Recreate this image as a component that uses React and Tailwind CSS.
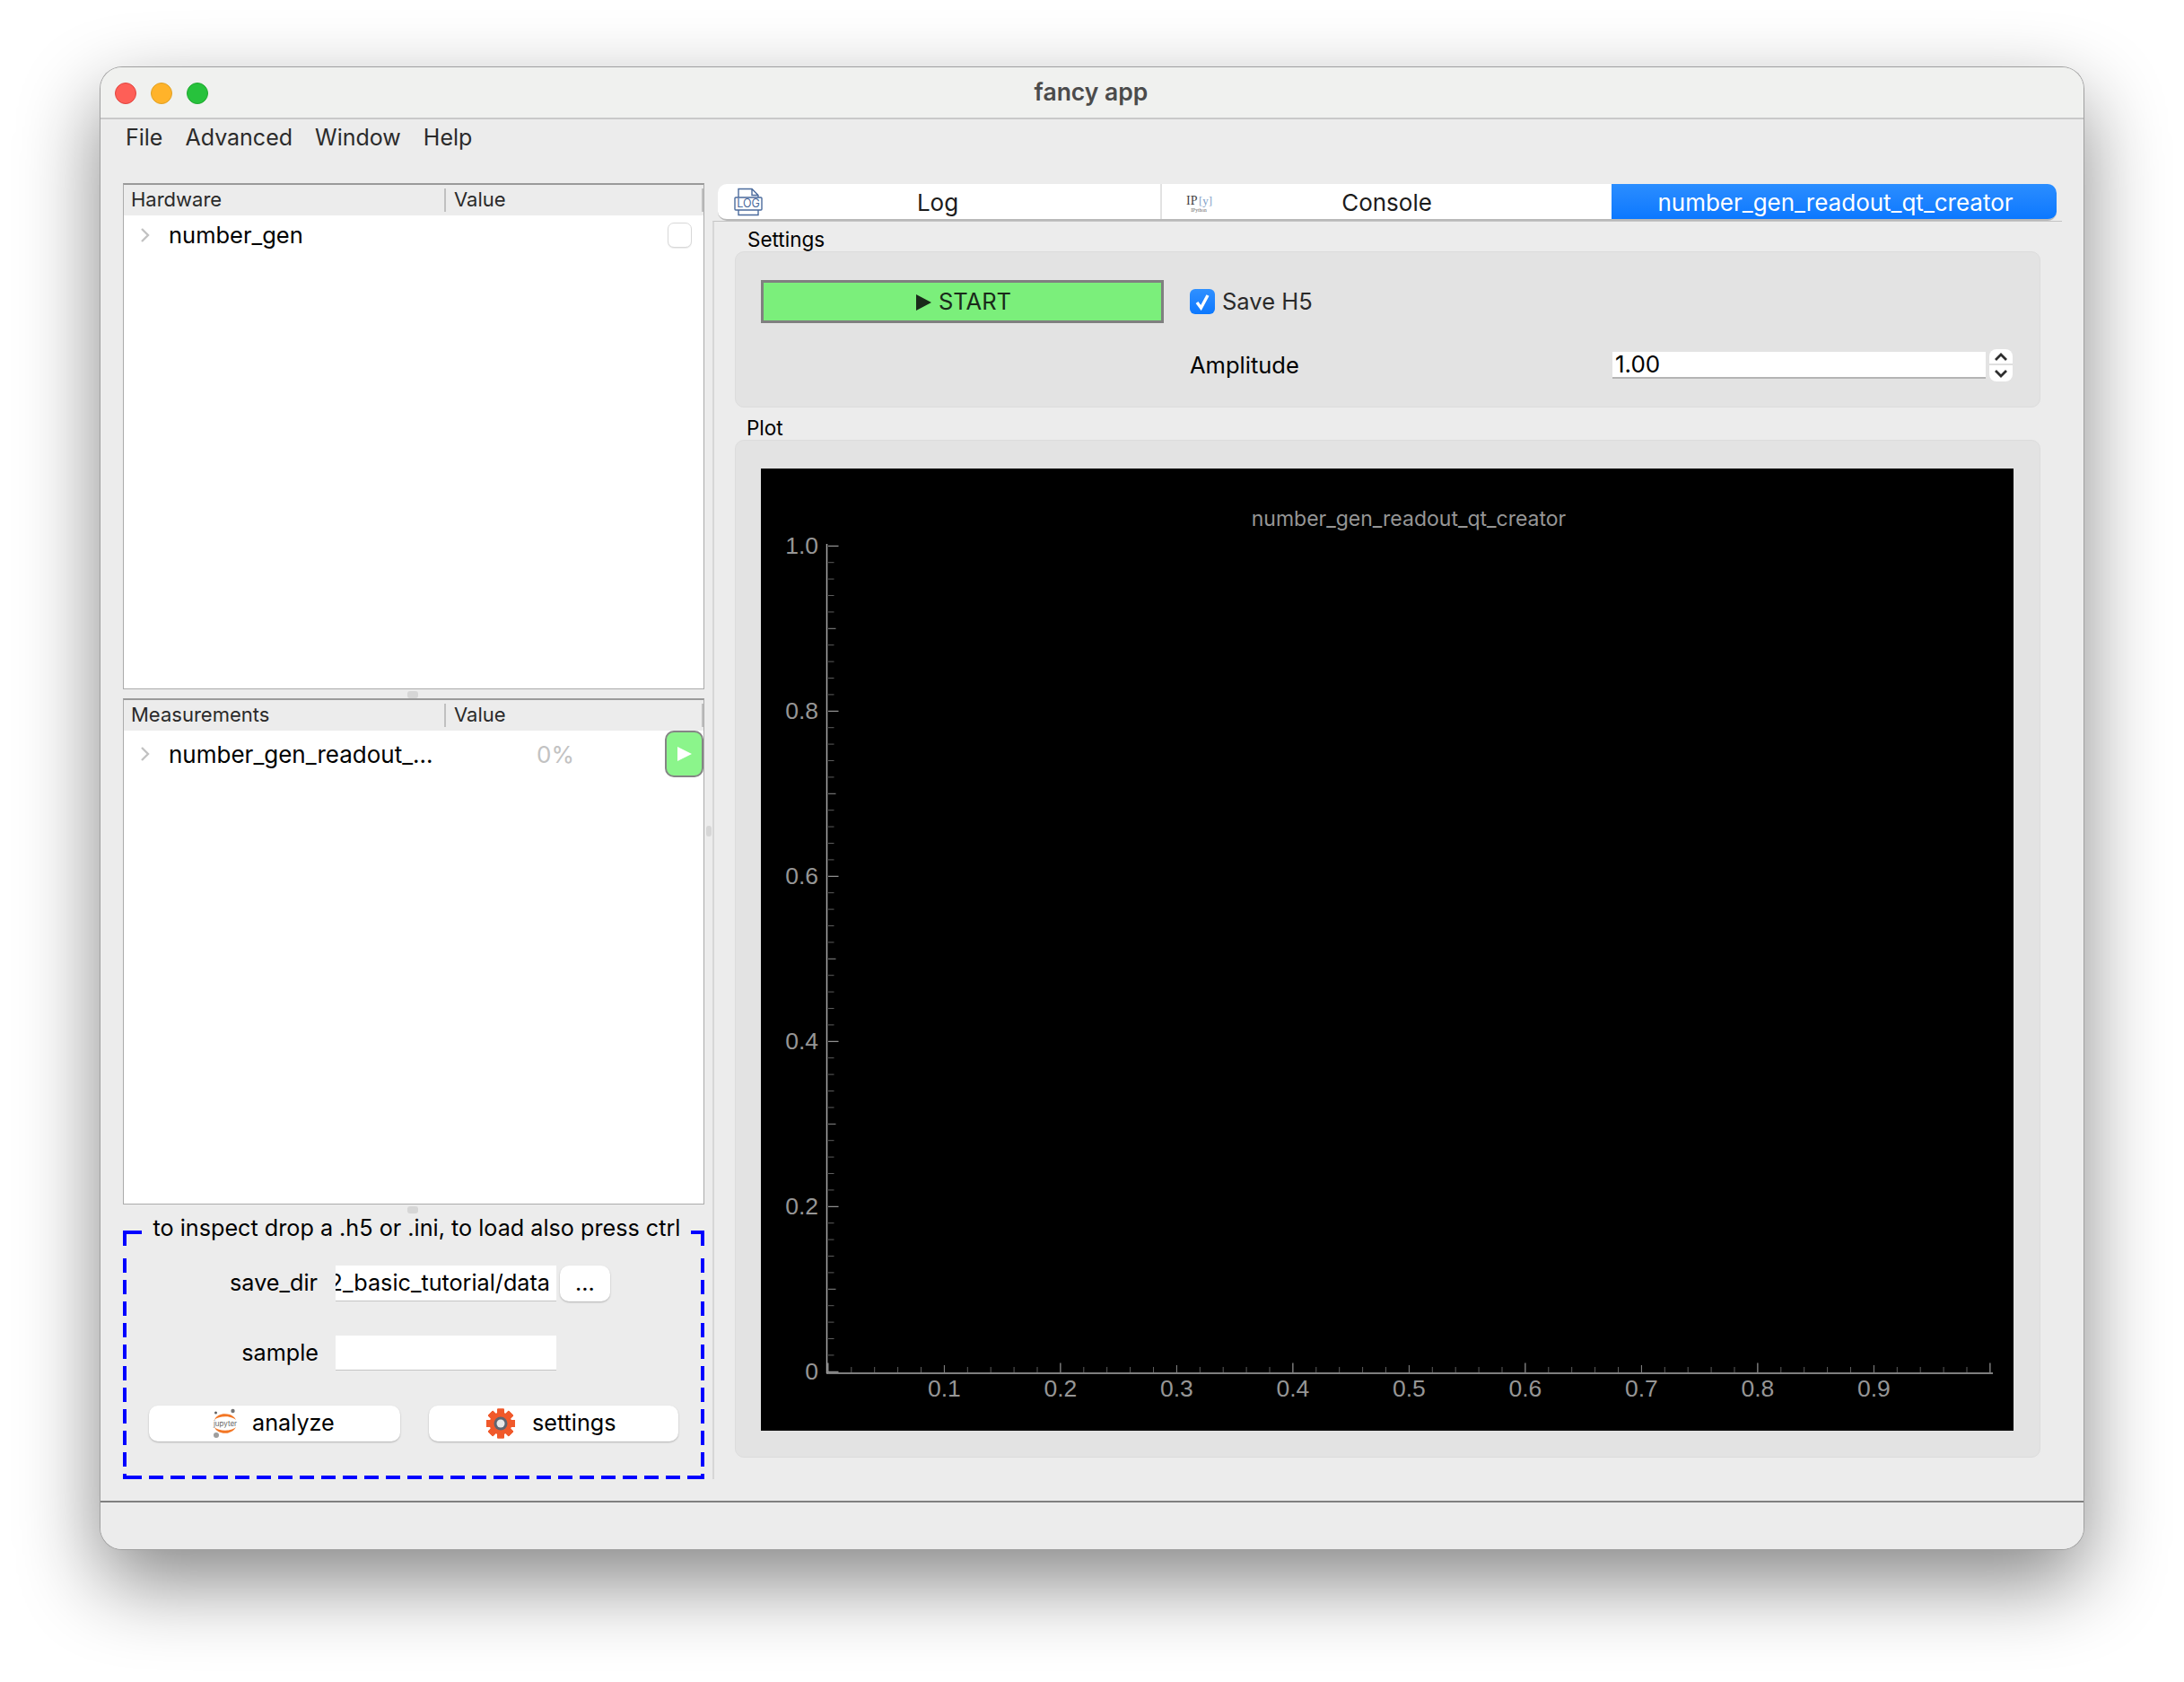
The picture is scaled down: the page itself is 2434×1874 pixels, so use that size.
import React from 'react';

const yLabels = ['1.0', '0.8', '0.6', '0.4', '0.2', '0'];
const xLabels = ['0.1', '0.2', '0.3', '0.4', '0.5', '0.6', '0.7', '0.8', '0.9'];
const ticks = Array.from({ length: 51 }, (_, i) => i);

const tickColor = (i) => (i % 10 === 0 ? '#b4b4b4' : i % 5 === 0 ? '#8a8a8a' : '#5c5c5c');

const Chevron = () => (
  <svg width="14" height="18" viewBox="0 0 14 18" className="shrink-0">
    <polyline points="3,2 10,9 3,16" fill="none" stroke="#c2c2c2" strokeWidth="2.4" />
  </svg>
);

const LogIcon = () => (
  <svg width="32" height="32" viewBox="0 0 32 32" className="shrink-0">
    <path d="M5 11V1.5h15l7 7V11M20 1.5v7h7M5 25v5.500h22V25" fill="none" stroke="#4a6a9c" strokeWidth="1.4" />
    <rect x="1" y="11" width="30" height="14" rx="1" fill="#fff" stroke="#4a6a9c" strokeWidth="1.4" />
    <text x="16" y="22" textAnchor="middle" fontSize="12.500" fill="#4a6a9c" fontFamily="Inter, sans-serif">LOG</text>
  </svg>
);

const IPythonIcon = () => (
  <svg width="30" height="22" viewBox="0 0 30 22" className="shrink-0">
    <text x="0" y="13" fontSize="14" fill="#444" fontFamily="'Liberation Serif', serif">IP</text>
    <text x="14" y="13" fontSize="13" fill="#7f9fc8" fontFamily="'Liberation Serif', serif">[y]:</text>
    <text x="14" y="21" textAnchor="middle" fontSize="5.500" fill="#666" fontFamily="'Liberation Serif', serif">IPython</text>
  </svg>
);

const JupyterIcon = () => (
  <svg width="30" height="34" viewBox="0 0 30 34" className="shrink-0">
    <path d="M3 13C6 4 23 4 27 13C22 8 8 8 3 13Z" fill="#f37726" />
    <path d="M3 21C6 30 23 30 27 21C22 26 8 26 3 21Z" fill="#f37726" />
    <circle cx="23.500" cy="3" r="2.200" fill="#767677" />
    <circle cx="4.500" cy="5" r="1.500" fill="#616262" />
    <circle cx="5" cy="30" r="3" fill="#9e9e9e" />
    <text x="15" y="20" textAnchor="middle" fontSize="8" fill="#666" fontFamily="Inter, sans-serif">jupyter</text>
  </svg>
);

const GearIcon = () => (
  <svg width="32" height="34" viewBox="0 0 32 34" className="shrink-0">
    <g fill="#f0592b">
      {[0, 45, 90, 135, 180, 225, 270, 315].map((a) => (
        <rect key={a} x="12" y="0.500" width="8" height="33" rx="1" transform={`rotate(${a} 16 17)`} />
      ))}
      <circle cx="16" cy="17" r="12.500" />
    </g>
    <circle cx="16" cy="17" r="7.500" fill="#5f6470" />
    <circle cx="16" cy="17" r="4.500" fill="#e8e8e8" />
  </svg>
);

const Handle = () => (
  <div className="h-[10px] flex justify-center items-end">
    <div className="w-[12px] h-[8px] mr-[2px] rounded-[3px] bg-[#d6d6d6]" />
  </div>
);

const TreeHeader = ({ title }) => (
  <div className="h-[34px] shrink-0 bg-[#ececec] flex items-center text-[22px] text-[#2a2a2a]">
    <div className="w-[359px] h-[26px] pl-[8px] border-r-2 border-[#c0c0c0] leading-[25px]">{title}</div>
    <div className="flex-1 h-[26px] pl-[9px] border-r-2 border-[#c0c0c0] leading-[25px]">Value</div>
  </div>
);

const PlotCanvas = () => (
  <svg width="1396" height="1072" viewBox="0 0 1396 1072" className="block bg-black">
    <text x="722" y="64" textAnchor="middle" fontSize="23" fill="#969696" fontFamily="Inter, sans-serif">
      number_gen_readout_qt_creator
    </text>
    <line x1="73.500" y1="84" x2="73.500" y2="1008" stroke="#a8a8a8" strokeWidth="1.500" />
    <line x1="73" y1="1008" x2="1373" y2="1008" stroke="#a8a8a8" strokeWidth="1.500" />
    {ticks.map((i) => {
      const y = 86.3 + i * 18.4;
      const len = i % 10 === 0 ? 11.5 : i % 5 === 0 ? 8.5 : 6.5;
      return <line key={i} x1="75" y1={y} x2={75 + len} y2={y} stroke={tickColor(i)} strokeWidth="1" />;
    })}
    {ticks.map((i) => {
      const x = 74.9 + i * 25.9;
      const len = i % 10 === 0 ? 10.5 : i % 5 === 0 ? 8 : 6;
      return <line key={i} x1={x} y1="1007" x2={x} y2={1007 - len} stroke={tickColor(i)} strokeWidth="1" />;
    })}
    <g fontSize="26.500" fill="#969696" fontFamily="'Liberation Sans', Arial, sans-serif">
      {yLabels.map((label, i) => (
        <text key={label} x="64" y={95 + i * 184} textAnchor="end">{label}</text>
      ))}
      {xLabels.map((label, i) => (
        <text key={label} x={74.9 + (i + 1) * 129.5} y="1034" textAnchor="middle">{label}</text>
      ))}
    </g>
  </svg>
);

const App = () => {
  return (
    <div className="w-[2434px] h-[1874px] bg-white pt-[75px] pl-[112px] font-['Inter',sans-serif] text-black">
      <div className="w-[2210px] h-[1651px] flex flex-col rounded-[24px] overflow-hidden bg-[#ececec] shadow-[0_0_0_1px_#a0a0a0,0_36px_90px_rgba(0,0,0,0.48)]">
        {/* title bar */}
        <div className="relative h-[58px] shrink-0 pr-[2px] bg-[#f0f1ef] border-b-2 border-[#c9c9c9] flex items-center justify-center text-[26.500px] font-semibold text-[#4b4b4b]">
          <div className="absolute left-[16px] top-[17px] flex gap-[16px]">
            <div className="w-[24px] h-[24px] rounded-full bg-[#fe5f57] border border-[#e0443e]" />
            <div className="w-[24px] h-[24px] rounded-full bg-[#ffb32a] border border-[#dfa023]" />
            <div className="w-[24px] h-[24px] rounded-full bg-[#27c23c] border border-[#1fa72f]" />
          </div>
          fancy app
        </div>

        {/* menu bar */}
        <div className="h-[71px] shrink-0 pl-[28px] flex gap-[25px] items-start pt-[4px] text-[25px] leading-[32px] text-[#2b2b2b]">
          <span>File</span>
          <span>Advanced</span>
          <span>Window</span>
          <span>Help</span>
        </div>

        <div className="flex-1 flex pl-[25px] pb-[24px] min-h-0">
          {/* left column */}
          <div className="w-[648px] shrink-0 flex flex-col">
            <div className="h-[564px] flex flex-col bg-white border border-[#ababab] border-t-2 border-t-[#9a9a9a]">
              <TreeHeader title="Hardware" />
              <div className="h-[44px] flex items-center pl-[17px] pr-[13px] text-[25.500px]">
                <Chevron />
                <span className="ml-[19px] flex-1">number_gen</span>
                <div className="w-[27px] h-[28px] rounded-[7px] bg-white border border-[#d8d8d8] shadow-[0_1px_1px_rgba(0,0,0,0.08)]" />
              </div>
            </div>
            <Handle />
            <div className="h-[564px] flex flex-col bg-white border border-[#ababab] border-t-2 border-t-[#9a9a9a]">
              <TreeHeader title="Measurements" />
              <div className="h-[52px] flex items-center pl-[17px] text-[26px]">
                <Chevron />
                <span className="ml-[19px] w-[410px] shrink-0 whitespace-nowrap">number_gen_readout_...</span>
                <span className="w-[60px] text-[#c2c2c2] shrink-0">0%</span>
                <div className="ml-auto w-[43px] h-[52px] rounded-[10px] bg-[#8bf58b] border-2 border-[#858585] flex items-center justify-center">
                  <div className="w-0 h-0 border-y-[8px] border-y-transparent border-l-[16px] border-l-white" />
                </div>
              </div>
            </div>
            <Handle />

            {/* drop zone */}
            <div className="relative h-[296px] shrink-0 text-[25.200px]">
              <svg width="648" height="296" viewBox="0 0 648 296" className="absolute inset-0">
                <g fill="none" stroke="#0000ff" strokeWidth="4">
                  <path d="M21 21H2V36" />
                  <path d="M633 21H646V36" />
                  <path d="M2 50V296" strokeDasharray="16 8" />
                  <path d="M646 50V296" strokeDasharray="16 8" />
                  <path d="M2 294H21" />
                  <path d="M29 294H646" strokeDasharray="16 8" />
                </g>
              </svg>
              <div className="relative pt-[1px] h-[32px] leading-[30px] text-center whitespace-nowrap pl-[7px]">
                to inspect drop a .h5 or .ini, to load also press ctrl
              </div>
              <div className="relative mt-[26px] flex items-center h-[40px]">
                <span className="w-[217px] text-right">save_dir</span>
                <div className="ml-[20px] w-[246px] h-[40px] bg-white border-b border-[#c4c4c4] flex justify-end items-center overflow-hidden pr-[7px] whitespace-nowrap">
                  <span className="shrink-0">2_basic_tutorial/data</span>
                </div>
                <div className="ml-[4px] w-[56px] h-[40px] rounded-[10px] bg-white shadow-[0_1px_2px_rgba(0,0,0,0.25)] flex items-center justify-center">...</div>
              </div>
              <div className="relative mt-[38px] flex items-center h-[39px]">
                <span className="w-[218px] text-right">sample</span>
                <div className="ml-[19px] w-[246px] h-[39px] bg-white border-b border-[#c4c4c4]" />
              </div>
              <div className="relative mt-[39px] pl-[29px] flex gap-[32px] h-[40px]">
                <div className="w-[280px] h-[40px] rounded-[10px] bg-white shadow-[0_1px_2px_rgba(0,0,0,0.25)] flex items-center pl-[70px] gap-[15px]">
                  <JupyterIcon />
                  <span>analyze</span>
                </div>
                <div className="w-[278px] h-[40px] rounded-[10px] bg-white shadow-[0_1px_2px_rgba(0,0,0,0.25)] flex items-center pl-[64px] gap-[19px]">
                  <GearIcon />
                  <span>settings</span>
                </div>
              </div>
            </div>
          </div>

          {/* splitter */}
          <div className="w-[9px] shrink-0 flex items-center">
            <div className="ml-[2px] w-[6px] h-[12px] rounded-[3px] bg-[#d6d6d6]" />
          </div>

          {/* right column */}
          <div className="w-[1504px] shrink-0 pt-[1px]">
            <div className="ml-[6px] w-[1492px] h-[41px] flex rounded-[10px] bg-white border-b-2 border-[#b9b9b9] overflow-hidden text-[26px] leading-[36px] text-[#1c1c1c]">
              <div className="relative w-[495px] flex items-center justify-center border-r-2 border-[#e2e2e2] pt-[3px] pr-[3px]">
                <div className="absolute left-[18px] top-[4px]"><LogIcon /></div>
                Log
              </div>
              <div className="relative w-[501px] flex items-center justify-center pt-[3px]">
                <div className="absolute left-[27px] top-[10px]"><IPythonIcon /></div>
                Console
              </div>
              <div className="flex-1 flex items-center justify-center pt-[3px] pl-[3px] bg-gradient-to-b from-[#2a8dff] to-[#0a78ff] text-white">
                number_gen_readout_qt_creator
              </div>
            </div>

            <div className="h-[1402px] border-l-2 border-[#d6d6d6] border-t border-t-[#c4c4c4] pl-[23px] pr-[24px]">
              <div className="h-[33px] pt-[7px] pl-[14px] leading-[26px] text-[22.500px]">Settings</div>
              <div className="h-[174px] rounded-[10px] bg-[#e3e3e3] border border-[#dcdcdc] pl-[28px] pt-[31px] text-[25.500px]">
                <div className="grid grid-cols-[450px_499px_auto] gap-y-[28px] items-center">
                  <div className="h-[48px] mr-[1px] pl-[3px] pt-[1px] bg-[#7bef7b] border-[3px] border-[#808080] flex items-center justify-center gap-[8px] text-[#1a2a1a]">
                    <div className="w-0 h-0 border-y-[9px] border-y-transparent border-l-[17px] border-l-[#1a2a1a]" />
                    START
                  </div>
                  <div className="col-span-2 pl-[28px] flex items-center gap-[8px] text-[#2a2a2a]">
                    <div className="w-[28px] h-[28px] rounded-[6px] bg-gradient-to-b from-[#2f90ff] to-[#0a78ff] flex items-center justify-center">
                      <svg width="18" height="20" viewBox="0 0 18 20">
                        <polyline points="3,11 7.500,17 15,3" fill="none" stroke="#fff" strokeWidth="3.400" />
                      </svg>
                    </div>
                    Save H5
                  </div>
                  <div />
                  <div className="pl-[28px]">Amplitude</div>
                  <div className="flex items-center gap-[4px]">
                    <div className="w-[416px] h-[30px] bg-white border-b-2 border-[#b4b4b4] pl-[3px] text-[26px] leading-[28px]">1.00</div>
                    <div className="w-[26px] h-[36px] rounded-[8px] bg-white flex flex-col">
                      <div className="h-[18px] flex items-center justify-center border-b-2 border-[#dedede]">
                        <svg width="14" height="9" viewBox="0 0 14 9"><polyline points="1,8 7,2 13,8" fill="none" stroke="#2e2e2e" strokeWidth="2.800" /></svg>
                      </div>
                      <div className="h-[18px] flex items-center justify-center">
                        <svg width="14" height="9" viewBox="0 0 14 9"><polyline points="1,1 7,7 13,1" fill="none" stroke="#2e2e2e" strokeWidth="2.800" /></svg>
                      </div>
                    </div>
                  </div>
                </div>
              </div>
              <div className="h-[36px] pt-[10px] pl-[13px] leading-[26px] text-[22.500px]">Plot</div>
              <div className="h-[1134px] rounded-[10px] bg-[#e3e3e3] border border-[#dcdcdc] pl-[28px] pt-[31px]">
                <PlotCanvas />
              </div>
            </div>
          </div>
        </div>

        {/* status bar */}
        <div className="h-[54px] shrink-0 border-t-2 border-[#808080] bg-[#ececec]" />
      </div>
    </div>
  );
};

export default App;
